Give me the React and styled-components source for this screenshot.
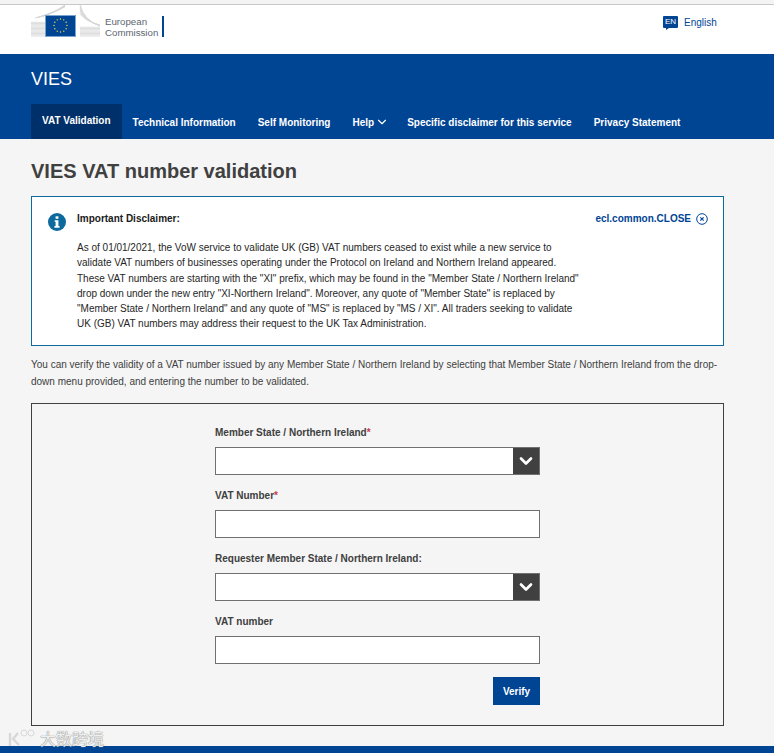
import React from 'react'
import styled, { createGlobalStyle } from 'styled-components'
import { ChevronDown } from 'lucide-react'

const GlobalStyle = createGlobalStyle`
    html, body {
        margin: 0;
        padding: 0;
        background: #f5f5f5;
        font-family: "Liberation Sans", Arial, sans-serif;
    }
    * {
        box-sizing: border-box;
    }
`

const Page = styled.div`
    position: relative;
    width: 774px;
    height: 753px;
    overflow: hidden;
    display: flex;
    flex-direction: column;
`

const TopBar = styled.header`
    height: 54px;
    flex: none;
    background: #fff;
    border-top: 1px solid #f4f4f4;
    box-shadow: inset 0 3px 0 #f4f4f4, inset 0 4px 0 #c8c8c8;
    padding: 4px 0 0 31px;
    display: flex;
    align-items: flex-start;
`

const Logo = styled.div`
    width: 135px;
    height: 33px;
    display: flex;
    align-items: flex-end;
    gap: 3px;
`

const LogoText = styled.div`
    font-size: 9.7px;
    line-height: 10.5px;
    color: #5c6670;
    border-right: 2px solid #004494;
    padding: 1px 4px 0 0;
    margin-bottom: 1px;
    height: 21px;
    white-space: nowrap;
`

const Lang = styled.div`
    margin: 11px 0 0 497px;
    display: flex;
    align-items: center;
    gap: 6px;
    font-size: 10px;
    color: #004494;
`

const LangIcon = styled.span`
    position: relative;
    width: 15px;
    height: 12px;
    background: #004494;
    color: #fff;
    font-size: 8px;
    line-height: 12px;
    text-align: center;
    border-radius: 1px;
    &::after {
        content: '';
        position: absolute;
        left: 3px;
        bottom: -2px;
        border-left: 3px solid #004494;
        border-bottom: 2px solid transparent;
    }
`

const Banner = styled.div`
    height: 85px;
    flex: none;
    background: #004494;
    padding: 0 31px;
    display: flex;
    flex-direction: column;
    justify-content: space-between;
`

const SiteName = styled.div`
    color: #fff;
    font-size: 18px;
    line-height: 20px;
    margin-top: 15px;
`

const Nav = styled.nav`
    display: flex;
    height: 35px;
`

const NavItem = styled.a`
    display: flex;
    align-items: center;
    gap: 1px;
    height: 35px;
    padding: ${p => (p.$active ? '0 11px 2px' : '1px 11px 0')};
    background: ${p => (p.$active ? '#003069' : 'transparent')};
    color: #fff;
    font-size: 10px;
    font-weight: 700;
    white-space: nowrap;
`

const NavChevron = styled(ChevronDown)`
    margin-right: -4px;
`

const Main = styled.main`
    flex: 1;
    padding: 0 50px 0 31px;
`

const Title = styled.h1`
    margin: 21px 0 13px;
    font-size: 20px;
    line-height: 23px;
    font-weight: 700;
    color: #404040;
`

const Notice = styled.section`
    height: 150px;
    background: #fff;
    border: 1px solid #0e6a9c;
    padding: 14px 15px 0 16px;
    display: flex;
`

const InfoIcon = styled.svg`
    width: 18px;
    height: 18px;
    flex: none;
    margin: 2px 11px 0 0;
`

const NoticeBody = styled.div`
    width: 503px;
    flex: none;
    color: #262626;
    font-size: 10px;
    line-height: 15.2px;
`

const NoticeTitle = styled.div`
    font-weight: 700;
    color: #1a1a1a;
    margin-bottom: 14px;
`

const Close = styled.div`
    display: flex;
    align-items: center;
    justify-content: flex-end;
    flex: 1;
    height: 15px;
    gap: 5px;
    color: #004494;
    font-size: 10px;
    font-weight: 700;
    white-space: nowrap;
`

const Intro = styled.p`
    margin: 10px 0 13px;
    font-size: 10px;
    line-height: 17px;
    color: #404040;
`

const FormBox = styled.form`
    height: 323px;
    border: 1px solid #404040;
    padding: 20px 0 0 183px;
`

const Field = styled.div`
    width: 325px;
    height: 63px;
`

const Label = styled.label`
    display: block;
    height: 16px;
    margin-bottom: 7px;
    font-size: 10px;
    line-height: 17px;
    font-weight: 700;
    color: #404040;
`

const Required = styled.span`
    color: #cf3a4c;
`

const SelectBox = styled.div`
    height: 28px;
    background: #fff;
    border: 1px solid #707070;
    display: flex;
    justify-content: flex-end;
`

const SelectArrow = styled.span`
    width: 26px;
    background: #404040;
    color: #fff;
    display: flex;
    align-items: center;
    justify-content: center;
`

const TextInput = styled.input`
    display: block;
    width: 100%;
    height: 28px;
    padding: 0 8px;
    background: #fff;
    border: 1px solid #707070;
    border-radius: 0;
`

const Actions = styled.div`
    width: 325px;
    margin-top: 1px;
    display: flex;
    justify-content: flex-end;
`

const VerifyButton = styled.button`
    width: 47px;
    height: 28px;
    padding: 0;
    border: none;
    background: #004494;
    color: #fff;
    font-family: inherit;
    font-size: 10px;
    font-weight: 700;
`

const Footer = styled.footer`
    height: 7px;
    flex: none;
    background: #004494;
`

const Watermark = styled.div`
    position: absolute;
    left: 8px;
    bottom: 6px;
    display: flex;
    align-items: center;
    gap: 4px;
    color: #efefef;
    font-family: "Noto Sans CJK SC", sans-serif;
    font-size: 16px;
    line-height: 18px;
    text-shadow: 0 0 1px #8a8a8a, 0 0 1px #8a8a8a;
`

const stars = Array.from({ length: 12 }, (_, i) => {
    const a = (i * Math.PI) / 6
    return { x: 29.5 + Math.cos(a) * 6.5, y: 20.5 + Math.sin(a) * 6.5 }
})

const stripes = Array.from({ length: 12 }, (_, i) => i)

const EcLogo = () => (
    <svg width="71" height="33" viewBox="0 0 71 33" fill="none">
        <g stroke="#d6d6d6" strokeWidth="0.8">
            {stripes.map(i => (
                <line key={i} x1="0" y1={31 - i * 1.25} x2="14" y2={31 - i * 1.25} />
            ))}
            {stripes.slice(0, 8).map(i => (
                <line key={i} x1="49" y1={31 - i * 1.25} x2="69" y2={31 - i * 1.25} />
            ))}
            {stripes.slice(0, 8).map(i => (
                <React.Fragment key={i}>
                    <path d={`M${4 + i * 1.2} ${13 - i * 0.3}Q${20 + i} ${10 - i * 0.6} ${34} ${i * 0.25}`} />
                    <path d={`M49 ${i * 1.4 - 1}Q${52 + i * 0.4} ${15 + i * 0.2} ${69} ${21 - i * 0.1}`} />
                </React.Fragment>
            ))}
        </g>
        <rect x="14.5" y="10.5" width="30" height="21" fill="#004494" stroke="#7aa3cf" />
        {stars.map((s, i) => (
            <circle key={i} cx={s.x} cy={s.y} r="0.7" fill="#ffe14a" />
        ))}
    </svg>
)

const App = () => {
    return (
        <Page>
            <GlobalStyle />
            <TopBar>
                <Logo>
                    <EcLogo />
                    <LogoText>
                        European
                        <br />
                        Commission
                    </LogoText>
                </Logo>
                <Lang>
                    <LangIcon>EN</LangIcon>
                    English
                </Lang>
            </TopBar>
            <Banner>
                <SiteName>VIES</SiteName>
                <Nav>
                    <NavItem $active>VAT Validation</NavItem>
                    <NavItem>Technical Information</NavItem>
                    <NavItem>Self Monitoring</NavItem>
                    <NavItem>
                        Help
                        <NavChevron size={14} strokeWidth={2} />
                    </NavItem>
                    <NavItem>Specific disclaimer for this service</NavItem>
                    <NavItem>Privacy Statement</NavItem>
                </Nav>
            </Banner>
            <Main>
                <Title>VIES VAT number validation</Title>
                <Notice>
                    <InfoIcon viewBox="0 0 19 19">
                        <circle cx="9.5" cy="9.5" r="9.5" fill="#0e6a9c" />
                        <rect x="8" y="3.5" width="3" height="2.6" fill="#fff" />
                        <path d="M7 7.6h4v6.2h1.2v1.7H6.8v-1.7H8V9.3H7z" fill="#fff" />
                    </InfoIcon>
                    <NoticeBody>
                        <NoticeTitle>Important Disclaimer:</NoticeTitle>
                        As of 01/01/2021, the VoW service to validate UK (GB) VAT numbers ceased to exist while a new service to
                        <br />
                        validate VAT numbers of businesses operating under the Protocol on Ireland and Northern Ireland appeared.
                        <br />
                        These VAT numbers are starting with the "XI" prefix, which may be found in the "Member State / Northern Ireland"
                        <br />
                        drop down under the new entry "XI-Northern Ireland". Moreover, any quote of "Member State" is replaced by
                        <br />
                        "Member State / Northern Ireland" and any quote of "MS" is replaced by "MS / XI". All traders seeking to validate
                        <br />
                        UK (GB) VAT numbers may address their request to the UK Tax Administration.
                    </NoticeBody>
                    <Close>
                        ecl.common.CLOSE
                        <svg width="12" height="12" viewBox="0 0 12 12" fill="none" stroke="#004494">
                            <circle cx="6" cy="6" r="5.3" strokeWidth="1" />
                            <path d="M4.3 4.3l3.4 3.4M7.7 4.3l-3.4 3.4" strokeWidth="1.1" />
                        </svg>
                    </Close>
                </Notice>
                <Intro>
                    You can verify the validity of a VAT number issued by any Member State / Northern Ireland by selecting that Member State / Northern Ireland from the drop-
                    <br />
                    down menu provided, and entering the number to be validated.
                </Intro>
                <FormBox>
                    <Field>
                        <Label>
                            Member State / Northern Ireland<Required>*</Required>
                        </Label>
                        <SelectBox>
                            <SelectArrow>
                                <ChevronDown size={20} strokeWidth={3.2} />
                            </SelectArrow>
                        </SelectBox>
                    </Field>
                    <Field>
                        <Label>
                            VAT Number<Required>*</Required>
                        </Label>
                        <TextInput />
                    </Field>
                    <Field>
                        <Label>Requester Member State / Northern Ireland:</Label>
                        <SelectBox>
                            <SelectArrow>
                                <ChevronDown size={20} strokeWidth={3.2} />
                            </SelectArrow>
                        </SelectBox>
                    </Field>
                    <Field>
                        <Label>VAT number</Label>
                        <TextInput />
                    </Field>
                    <Actions>
                        <VerifyButton type="button">Verify</VerifyButton>
                    </Actions>
                </FormBox>
            </Main>
            <Footer />
            <Watermark>
                <svg width="28" height="18" viewBox="0 0 28 18" fill="none" stroke="#d8d8d8" strokeWidth="2.4">
                    <path d="M2 4v13M10 4L5 10l6 6" />
                    <circle cx="16" cy="4" r="3" strokeWidth="1" />
                    <circle cx="23" cy="4" r="3" strokeWidth="1" />
                </svg>
                大数跨境
            </Watermark>
        </Page>
    )
}

export default App
